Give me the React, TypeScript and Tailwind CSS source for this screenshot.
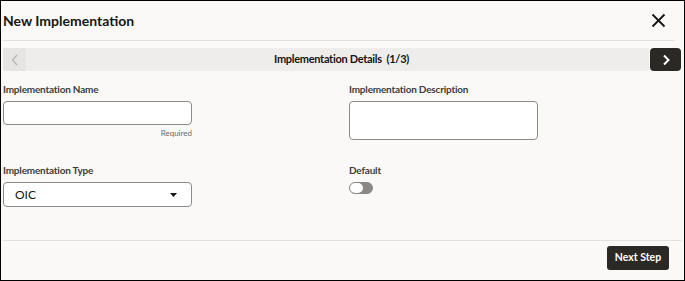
import React from 'react';

const Label = ({ children }: { children: React.ReactNode }) => (
  <div className="h-[10px] text-[10px] font-bold tracking-[-0.2px] text-[#3d3c3a] leading-none mb-[7px]">{children}</div>
);

const App: React.FC = () => {
  return (
    <div className="w-[685px] h-[281px] border border-black bg-[#faf9f7] font-['Lato',sans-serif] text-[#161513] flex flex-col">
      <div className="flex items-center justify-between h-[39px] pl-[2px] pr-[18px]">
        <h1 className="text-[14px] font-bold">New Implementation</h1>
        <svg width="15" height="15" viewBox="0 0 15 15">
          <path d="M1.5 1.5 L13.5 13.5 M13.5 1.5 L1.5 13.5" stroke="#161513" strokeWidth="1.8" />
        </svg>
      </div>
      <div className="ml-[2px] mr-[9px] border-t border-[#e2e1de]" />

      <div className="flex items-center mt-[7px] ml-[2px] mr-[3px] h-[23px] gap-[1px]">
        <div className="flex-1 flex items-center h-full bg-[#efedeb]">
          <div className="w-[23px] h-full flex items-center justify-center bg-[#e6e5e3]">
            <svg width="8" height="12" viewBox="0 0 8 12">
              <path d="M6 1 L1.5 6 L6 11" fill="none" stroke="#b4b3b0" strokeWidth="1.2" />
            </svg>
          </div>
          <div className="flex-1 text-center text-[11px] font-bold tracking-[-0.3px] pl-[8px]">
            Implementation Details&nbsp; (1/3)
          </div>
        </div>
        <button className="w-[31px] h-full rounded-[4px] bg-[#2b2926] flex items-center justify-center">
          <svg width="8" height="12" viewBox="0 0 8 12">
            <path d="M2 1.5 L6.5 6 L2 10.5" fill="none" stroke="#ffffff" strokeWidth="2" />
          </svg>
        </button>
      </div>

      <div className="grid grid-cols-[346px_1fr] pl-[2px] mt-[13px]">
        <div>
          <Label>Implementation Name</Label>
          <div className="w-[189px] h-[24px] bg-white border border-[#8d8b88] rounded-[4px]" />
          <div className="w-[189px] text-right text-[8px] text-[#6e6c69] mt-[4px] leading-none">Required</div>
        </div>
        <div>
          <Label>Implementation Description</Label>
          <div className="w-[189px] h-[39px] bg-white border border-[#8d8b88] rounded-[4px]" />
        </div>
      </div>

      <div className="grid grid-cols-[346px_1fr] pl-[2px] mt-[25px]">
        <div>
          <Label>Implementation Type</Label>
          <div className="w-[189px] h-[25px] bg-white border border-[#8d8b88] rounded-[4px] flex items-center justify-between pl-[11px] pr-[14px]">
            <span className="text-[12px] text-[#161513]">OIC</span>
            <svg width="7" height="4" viewBox="0 0 7 4">
              <path d="M0 0 L7 0 L3.5 4 Z" fill="#161513" />
            </svg>
          </div>
        </div>
        <div>
          <Label>Default</Label>
          <div className="mt-[5px] w-[24px] h-[12px] rounded-full bg-[#8a8885] border border-[#8a8885] flex items-center">
            <div className="w-[13px] h-[10px] rounded-full bg-white" />
          </div>
        </div>
      </div>

      <div className="flex-1" />
      <div className="ml-[2px] mr-[3px] border-t border-[#e2e1de]" />
      <div className="flex justify-end pr-[15px] pt-[5px] pb-[10px]">
        <button className="h-[24px] w-[62px] rounded-[3px] bg-[#2b2926] text-white text-[10.5px] font-bold">
          Next Step
        </button>
      </div>
    </div>
  );
};

export default App;
